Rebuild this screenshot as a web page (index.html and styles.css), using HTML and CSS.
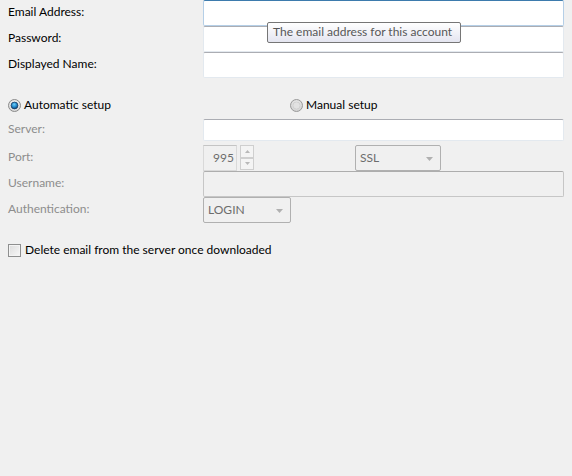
FILE: index.html
```html
<!DOCTYPE html>
<html>
<head>
<meta charset="utf-8">
<link rel="stylesheet" href="styles.css">
</head>
<body>
<div class="page">
  <div class="identity">
    <div class="row tall">
      <label class="lbl">Email Address:</label>
      <div class="field focused"></div>
    </div>
    <div class="row tall">
      <label class="lbl">Password:</label>
      <div class="field"></div>
    </div>
    <div class="row tall">
      <label class="lbl">Displayed Name:</label>
      <div class="field"></div>
    </div>
  </div>

  <div class="modes">
    <div class="radio-opt auto">
      <svg class="radio" width="13" height="13" viewBox="0 0 13 13">
        <defs>
          <radialGradient id="rg1" cx="50%" cy="40%" r="60%">
            <stop offset="0" stop-color="#ffffff"/>
            <stop offset="1" stop-color="#d4d4d4"/>
          </radialGradient>
          <radialGradient id="dot" cx="45%" cy="35%" r="65%">
            <stop offset="0" stop-color="#6ed0fa"/>
            <stop offset="0.6" stop-color="#1d84c8"/>
            <stop offset="1" stop-color="#0b3f73"/>
          </radialGradient>
        </defs>
        <circle cx="6.5" cy="6.5" r="6" fill="url(#rg1)" stroke="#8a8a8a" stroke-width="1"/>
        <circle cx="6.5" cy="6.5" r="3.4" fill="url(#dot)" stroke="#1b3e64" stroke-width="0.8"/>
      </svg>
      <span>Automatic setup</span>
    </div>
    <div class="radio-opt manual">
      <svg class="radio" width="13" height="13" viewBox="0 0 13 13">
        <defs>
          <radialGradient id="rg2" cx="50%" cy="40%" r="60%">
            <stop offset="0" stop-color="#f6f6f6"/>
            <stop offset="1" stop-color="#cfcfcf"/>
          </radialGradient>
        </defs>
        <circle cx="6.5" cy="6.5" r="6" fill="url(#rg2)" stroke="#9a9a9a" stroke-width="1"/>
        <circle cx="6.5" cy="6.5" r="3.6" fill="#e2e2e2" stroke="#c4c4c4" stroke-width="0.6"/>
      </svg>
      <span>Manual setup</span>
    </div>
  </div>

  <div class="server">
    <div class="row srv">
      <label class="lbl dim">Server:</label>
      <div class="field"></div>
    </div>
    <div class="row tall">
      <label class="lbl dim">Port:</label>
      <div class="port-group">
        <div class="spinbox">
          <div class="spin-val">995</div>
          <div class="spin-btns">
            <div class="spin-btn">
              <svg width="5" height="3" viewBox="0 0 5 3"><path d="M0 3 L2.5 0 L5 3 Z" fill="#b8b8b8"/></svg>
            </div>
            <div class="spin-btn">
              <svg width="5" height="3" viewBox="0 0 5 3"><path d="M0 0 L2.5 3 L5 0 Z" fill="#b8b8b8"/></svg>
            </div>
          </div>
        </div>
        <div class="combo ssl">
          <span>SSL</span>
          <svg width="7" height="4" viewBox="0 0 7 4"><path d="M0 0 L3.5 4 L7 0 Z" fill="#b0b0b0"/></svg>
        </div>
      </div>
    </div>
    <div class="row tall">
      <label class="lbl dim">Username:</label>
      <div class="field disabled"></div>
    </div>
    <div class="row tall">
      <label class="lbl dim">Authentication:</label>
      <div class="combo login">
        <span>LOGIN</span>
        <svg width="7" height="4" viewBox="0 0 7 4"><path d="M0 0 L3.5 4 L7 0 Z" fill="#b0b0b0"/></svg>
      </div>
    </div>
  </div>

  <div class="check-row">
    <span class="checkbox"></span>
    <span>Delete email from the server once downloaded</span>
  </div>

  <div class="tooltip">The email address for this account</div>
</div>
</body>
</html>
```

FILE: styles.css
```css
html, body {
  margin: 0;
  padding: 0;
  background: #f0f0f0;
}
body {
  font-family: "Lato", "Liberation Sans", sans-serif;
  font-size: 12px;
  color: #000;
  width: 572px;
  height: 476px;
  overflow: hidden;
}
.page {
  position: relative;
  padding: 0 8px 0 8px;
  display: flex;
  flex-direction: column;
}
.row {
  display: flex;
  align-items: center;
}
.row.tall { height: 26px; }
.row.srv { height: 22px; }
.lbl {
  width: 195px;
  flex: none;
  padding-bottom: 3px;
}
.lbl.dim { color: #8d8d8d; }
.field {
  box-sizing: border-box;
  width: 361px;
  height: 100%;
  background: #fff;
  border: 1px solid #e3e9ef;
  border-top-color: #abadb3;
  border-radius: 2px;
}
.field.focused {
  border-color: #b5cfe7;
  border-top-color: #3d7bad;
}
.field.disabled {
  background: #f0f0f0;
  border-color: #c6c6c6;
  border-top-color: #adadad;
}
.modes {
  display: flex;
  align-items: center;
  height: 18px;
  margin-top: 18px;
  margin-bottom: 5px;
}
.radio-opt {
  display: flex;
  align-items: center;
  gap: 3px;
}
.radio-opt span { padding-bottom: 2px; }
.radio-opt.auto { width: 282px; }
.radio { display: block; flex: none; }
.server { display: flex; flex-direction: column; }
.server .row.srv { margin-bottom: 4px; }
.port-group {
  display: flex;
  align-items: stretch;
  height: 100%;
}
.spinbox {
  display: flex;
  gap: 3px;
  width: 152px;
}
.spin-val {
  box-sizing: border-box;
  width: 34px;
  border: 1px solid #d9d9d9;
  border-top-color: #c4c4c4;
  color: #6d6d6d;
  text-align: right;
  padding: 4px 2px 0 0;
  background: #f0f0f0;
}
.spin-btns {
  display: flex;
  flex-direction: column;
  width: 14px;
  height: 25px;
}
.spin-btn {
  box-sizing: border-box;
  flex: 1;
  border: 1px solid #cfcfcf;
  background: #f4f4f4;
  display: flex;
  align-items: center;
  justify-content: center;
}
.spin-btn svg { display: block; }
.combo {
  box-sizing: border-box;
  height: 26px;
  border: 1px solid #b0b0b0;
  border-radius: 2px;
  background: #f0f0f0;
  display: flex;
  align-items: center;
  justify-content: space-between;
  padding: 0 7px 2px 4px;
  color: #6d6d6d;
}
.combo svg { display: block; margin-top: 4px; }
.combo.ssl { width: 86px; }
.combo.login { width: 88px; }
.check-row {
  display: flex;
  align-items: center;
  gap: 4px;
  margin-top: 20px;
  height: 14px;
}
.check-row span:last-child { padding-bottom: 2px; }
.checkbox {
  box-sizing: border-box;
  width: 13px;
  height: 13px;
  border: 1px solid #8e8f8f;
  background: linear-gradient(135deg, #dcdcdc, #f8f8f8);
  box-shadow: inset 0 0 0 1px #f4f4f4;
}
.tooltip {
  position: absolute;
  left: 267px;
  top: 22px;
  box-sizing: border-box;
  width: 194px;
  height: 21px;
  border: 1px solid #767676;
  border-radius: 2px;
  background: linear-gradient(#ffffff, #e4e5f0);
  color: #575757;
  padding: 1px 0 0 5px;
  white-space: nowrap;
}
```
